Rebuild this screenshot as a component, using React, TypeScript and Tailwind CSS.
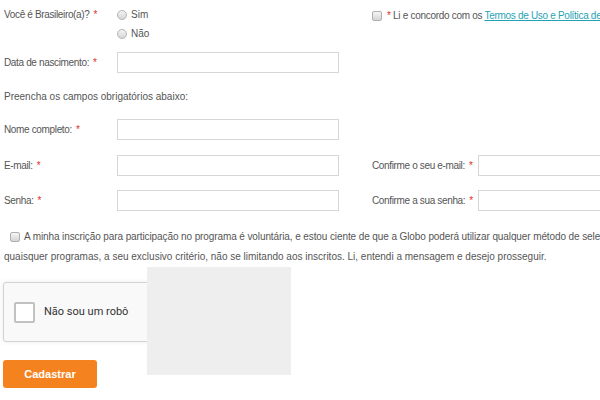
import React from "react";

const Req = () => <span className="ml-1 text-[#e0302b]">*</span>;

function Radio({ label }: { label: string }) {
  return (
    <label className="flex items-center gap-[4px]">
      <span className="inline-block h-[10px] w-[10px] rounded-full border border-[#b4b4b4] bg-gradient-to-b from-[#f4f4f4] to-[#d6d6d6]" />
      <span>{label}</span>
    </label>
  );
}

function Box() {
  return (
    <span className="inline-block h-[10px] w-[10px] shrink-0 rounded-[2px] border border-[#b0b0b0] bg-gradient-to-b from-[#f6f6f6] to-[#d4d4d4]" />
  );
}

function Field({ label, w = "w-[113px]" }: { label: string; w?: string }) {
  return (
    <>
      <div className={`${w} shrink-0 whitespace-nowrap tracking-[-0.35px]`}>
        {label}
        <Req />
      </div>
      <div className="h-[21px] w-[222px] shrink-0 border border-[#d6d6d6] bg-white" />
    </>
  );
}

export default function App() {
  return (
    <div
      className="relative h-[400px] w-[600px] overflow-hidden bg-white text-[10px] leading-[14px] text-[#555]"
      style={{ fontFamily: '"Liberation Sans", Arial, sans-serif' }}
    >
      <div className="pl-1">
        {/* Nationality + terms */}
        <div className="mt-[5px] flex">
          <div className="w-[113px] shrink-0 pt-[3px] tracking-[-0.35px]">
            Você é Brasileiro(a)?
            <Req />
          </div>
          <div className="flex w-[255px] shrink-0 flex-col">
            <div className="flex h-5 items-center">
              <Radio label="Sim" />
            </div>
            <div className="flex h-[18px] items-center">
              <Radio label="Não" />
            </div>
          </div>
          <div className="flex h-[22px] items-center gap-[5px] whitespace-nowrap tracking-[-0.3px]">
            <Box />
            <span>
              <span className="text-[#e0302b]">*</span> Li e concordo com os{" "}
              <a className="text-[#1fa3b4] underline">Termos de Uso e Política de Privacidade</a>
            </span>
          </div>
        </div>

        <div className="mt-[9px] flex items-center">
          <Field label="Data de nascimento:" />
        </div>

        <p className="mt-[17px]">Preencha os campos obrigatórios abaixo:</p>

        <div className="mt-[15px] flex items-center">
          <Field label="Nome completo:" />
        </div>

        <div className="mt-[15px] flex items-center">
          <Field label="E-mail:" />
          <div className="w-[33px] shrink-0" />
          <Field label="Confirme o seu e-mail:" w="w-[106px]" />
        </div>

        <div className="mt-[14px] flex items-center">
          <Field label="Senha:" />
          <div className="w-[33px] shrink-0" />
          <Field label="Confirme a sua senha:" w="w-[106px]" />
        </div>

        <div className="mt-[16px] whitespace-nowrap leading-5">
          <div className="flex items-center gap-[4px] pl-[6px] tracking-[-0.1px]">
            <Box />
            <span>
              A minha inscrição para participação no programa é voluntária, e estou ciente de que a Globo poderá
              utilizar qualquer método de seleção de participantes para
            </span>
          </div>
          <div>
            quaisquer programas, a seu exclusivo critério, não se limitando aos inscritos. Li, entendi a mensagem e
            desejo prosseguir.
          </div>
        </div>
      </div>

      {/* Captcha */}
      <div className="relative pl-[3px] pt-[15px]">
        <div
          className="flex h-[60px] w-[284px] items-center rounded-[3px] border border-[#d3d3d3] bg-[#f9f9f9] pl-[10px] shadow-[0_0_4px_1px_rgba(0,0,0,0.06)]"
          style={{ fontFamily: "Roboto, Arial, sans-serif" }}
        >
          <span className="h-[21px] w-[21px] rounded-[2px] border-2 border-[#c1c1c1] bg-white" />
          <span className="ml-[9px] text-[11px] text-[#333]">Não sou um robô</span>
        </div>
        <div className="absolute left-[147px] top-0 h-[108px] w-[144px] bg-[#eeeeee]" />
        <button className="mt-[18px] h-[28px] w-[94px] rounded-[3px] bg-[#f4821f] text-[11px] font-bold text-white">
          Cadastrar
        </button>
      </div>
    </div>
  );
}
